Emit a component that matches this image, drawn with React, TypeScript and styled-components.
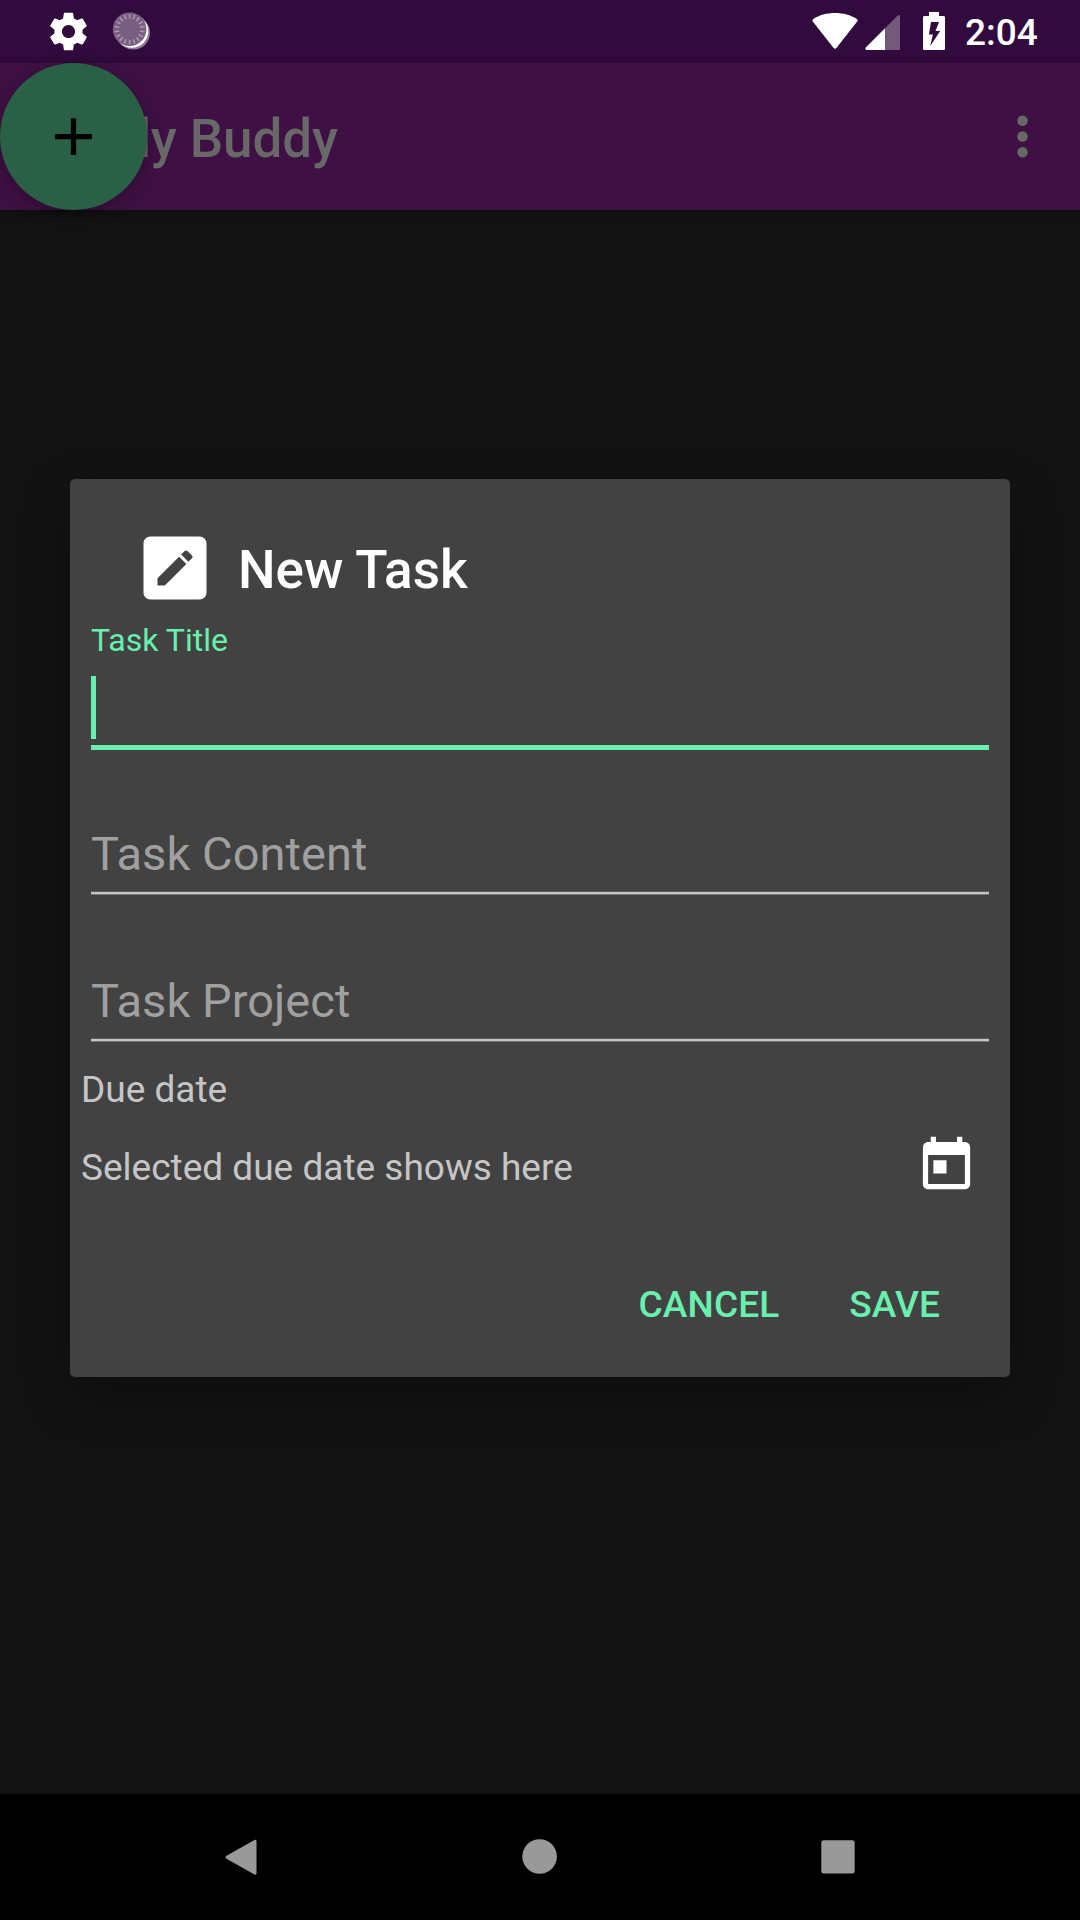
import React from "react";
import styled, { createGlobalStyle } from "styled-components";

const GlobalStyle = createGlobalStyle`
  *, *::before, *::after { box-sizing: border-box; }
  body { margin: 0; background: #131313; }
`;

const Screen = styled.div`
  position: relative;
  width: 1080px;
  height: 1920px;
  display: flex;
  flex-direction: column;
  overflow: hidden;
  background: #131313;
  font-family: Roboto, "Noto Sans", sans-serif;
`;

const StatusBar = styled.header`
  height: 63px;
  flex: none;
  display: flex;
  align-items: flex-start;
  justify-content: space-between;
  padding: 0 41px 0 46px;
  background: #310b3d;
`;

const StatusGroup = styled.div`
  display: flex;
  align-items: center;
  height: 62px;
`;

const Glyph = styled.svg<{ $w: number; $h: number; $ml?: number }>`
  display: block;
  flex: none;
  width: ${(p) => p.$w}px;
  height: ${(p) => p.$h}px;
  margin-left: ${(p) => p.$ml ?? 0}px;
`;

const Clock = styled.span`
  width: 74px;
  margin-left: 20px;
  padding-top: 4px;
  font-size: 37px;
  font-weight: 500;
  line-height: 44px;
  color: #fff;
`;

const Toolbar = styled.div`
  height: 147px;
  flex: none;
  display: flex;
  align-items: center;
  justify-content: space-between;
  padding: 0 26px 0 42px;
  background: #3e1043;
  box-shadow: 0 2px 8px rgba(0, 0, 0, 0.4);
`;

const AppTitle = styled.h1`
  margin: 0;
  padding-top: 5px;
  font-size: 53px;
  font-weight: 500;
  line-height: 62px;
  letter-spacing: -0.08px;
  color: #686868;
`;

const Fab = styled.button`
  position: absolute;
  left: 0;
  top: 63px;
  width: 147px;
  height: 147px;
  padding: 0;
  border: 0;
  border-radius: 50%;
  display: grid;
  place-items: center;
  background: #2a6045;
  box-shadow: 0 5px 16px rgba(0, 0, 0, 0.28);
`;

const Body = styled.main`
  flex: 1;
  display: flex;
  flex-direction: column;
  align-items: center;
  padding-top: 269px;
`;

const Dialog = styled.section`
  width: 940px;
  height: 898px;
  display: flex;
  flex-direction: column;
  border-radius: 5px;
  background: #424242;
  box-shadow: 0 18px 48px rgba(0, 0, 0, 0.35);
`;

const DialogHeader = styled.div`
  display: flex;
  align-items: center;
  gap: 21px;
  height: 84px;
  margin: 47px 63px 0;
`;

const DialogTitle = styled.h2`
  margin: 0;
  padding-top: 4px;
  font-size: 53px;
  font-weight: 500;
  line-height: 62px;
  color: #fff;
`;

const Fields = styled.div`
  display: flex;
  flex-direction: column;
  padding: 0 21px;
  margin-top: 11px;
`;

const Field = styled.label`
  display: flex;
  flex-direction: column;
  justify-content: flex-end;
`;

const FocusedField = styled(Field)`
  height: 129px;
  justify-content: space-between;
`;

const IdleField = styled(Field)<{ $h: number }>`
  height: ${(p) => p.$h}px;
`;

const FloatingLabel = styled.span`
  font-size: 32px;
  line-height: 38px;
  color: #69f0ae;
`;

const ActiveInput = styled.div`
  height: 74px;
  border-bottom: 5px solid #69f0ae;
`;

const Caret = styled.div`
  width: 5px;
  height: 63px;
  background: #69f0ae;
`;

const Hint = styled.span`
  font-size: 47px;
  line-height: 56px;
  letter-spacing: 0.05px;
  color: #a0a0a0;
`;

const Rule = styled.div`
  height: 4px;
  margin-top: 9px;
  background: linear-gradient(#5c5c5c 0 1px, #c6c6c6 1px 3px, #767676 3px 4px);
`;

const DueLabel = styled.div`
  padding-left: 11px;
  margin-top: 26px;
  font-size: 37px;
  line-height: 44px;
  color: #c6c6c6;
`;

const DueRow = styled.div`
  display: flex;
  align-items: center;
  justify-content: space-between;
  height: 63px;
  margin-top: 22px;
  padding: 0 32px 0 11px;
`;

const DueText = styled.span`
  padding-top: 4px;
  font-size: 37px;
  line-height: 44px;
  color: #c6c6c6;
`;

const Actions = styled.div`
  display: flex;
  justify-content: flex-end;
  gap: 70px;
  margin-top: 86px;
  padding-right: 70px;
`;

const TextButton = styled.button`
  padding: 0;
  border: 0;
  background: none;
  font: 500 37px/44px Roboto, "Noto Sans", sans-serif;
  letter-spacing: 0.12px;
  color: #69f0ae;
`;

const NavBar = styled.nav`
  height: 126px;
  flex: none;
  display: flex;
  align-items: center;
  justify-content: space-between;
  padding: 0 210px;
  background: #000;
`;

const ticks = Array.from({ length: 18 }, (_, i) => i * 20);

export default function App() {
  return (
    <Screen>
      <GlobalStyle />
      <StatusBar>
        <StatusGroup>
          <Glyph $w={45} $h={45} viewBox="0 0 24 24" fill="#fff">
            <path d="M19.43 12.98c.04-.32.07-.64.07-.98s-.03-.66-.07-.98l2.11-1.65c.19-.15.24-.42.12-.64l-2-3.46c-.12-.22-.39-.3-.61-.22l-2.49 1c-.52-.4-1.08-.73-1.69-.98l-.38-2.65C14.46 2.18 14.25 2 14 2h-4c-.25 0-.46.18-.49.42l-.38 2.65c-.61.25-1.17.59-1.69.98l-2.49-1c-.23-.09-.49 0-.61.22l-2 3.46c-.13.22-.07.49.12.64l2.11 1.65c-.04.32-.07.65-.07.98s.03.66.07.98l-2.11 1.65c-.19.15-.24.42-.12.64l2 3.46c.12.22.39.3.61.22l2.49-1c.52.4 1.08.73 1.69.98l.38 2.65c.03.24.24.42.49.42h4c.25 0 .46-.18.49-.42l.38-2.65c.61-.25 1.17-.59 1.69-.98l2.49 1c.23.09.49 0 .61-.22l2-3.46c.12-.22.07-.49-.12-.64l-2.11-1.65zM12 15.500c-1.930 0-3.500-1.570-3.500-3.500s1.570-3.500 3.500-3.500 3.500 1.570 3.500 3.500-1.570 3.500-3.500 3.500z" />
          </Glyph>
          <Glyph $w={40} $h={40} $ml={20} viewBox="0 0 40 40">
            <circle cx="22.2" cy="21.8" r="16.8" fill="#8f7b98" />
            <circle cx="20.7" cy="20.2" r="16.6" fill="#fff" />
            <circle cx="18.6" cy="18.2" r="16.8" fill="#785f82" />
            {ticks.map((a) => (
              <line key={a} x1="18.6" y1="2.9" x2="18.6" y2="7.6" stroke="#ab9ab1" strokeWidth="1.5" transform={`rotate(${a} 18.6 18.2)`} />
            ))}
          </Glyph>
        </StatusGroup>
        <StatusGroup>
          <Glyph $w={46} $h={40} viewBox="0 0 46 40" fill="#fff">
            <path d="M.8 10.600C.2 9.600.4 8.700 1.400 8 7 4 15 2 23 2s16 2 21.800 6c1 .7 1.200 1.600.4 2.600L24.600 36.800c-1 1.400-2.200 1.400-3.200 0z" />
          </Glyph>
          <Glyph $w={36} $h={40} $ml={7} viewBox="0 0 36 40">
            <path d="M20 17.300V39H2C0 39 0 37.500 1 36.300z" fill="#fff" />
            <path d="M20 17.300 32.500 4.800C34 3.500 35 4 35 5.700V37.500c0 1-.5 1.500-1.500 1.500H20z" fill="#735a7b" />
          </Glyph>
          <Glyph $w={22} $h={40} $ml={22} viewBox="0 0 22 40">
            <path fill="#fff" fillRule="evenodd" d="M6 1h10v4h4.500c1 0 1.500.6 1.500 1.500v31c0 1-.5 1.500-1.500 1.500h-19C.5 39 0 38.500 0 37.500v-31C0 5.600.5 5 1.500 5H6zM8 11 5.900 23.500h4L7.300 35 17.200 20h-4.700L16 11z" />
          </Glyph>
          <Clock>2:04</Clock>
        </StatusGroup>
      </StatusBar>

      <Toolbar>
        <AppTitle>Study Buddy</AppTitle>
        <Glyph $w={63} $h={63} viewBox="0 0 24 24" fill="#686868">
          <circle cx="12" cy="6" r="2" />
          <circle cx="12" cy="12" r="2" />
          <circle cx="12" cy="18" r="2" />
        </Glyph>
      </Toolbar>

      <Body>
        <Dialog role="dialog">
          <DialogHeader>
            <Glyph $w={84} $h={84} viewBox="0 0 24 24" fill="#fff">
              <path d="M19 3H5c-1.100 0-2 .9-2 2v14c0 1.100.9 2 2 2h14c1.100 0 2-.9 2-2V5c0-1.100-.9-2-2-2zM9.080 17H7v-2.080l6.170-6.170 2.080 2.080L9.080 17zm7.770-7.770-1.010 1.010-2.080-2.080 1.010-1.010c.22-.22.57-.22.78 0l1.300 1.300c.22.21.22.56 0 .78z" />
            </Glyph>
            <DialogTitle>New Task</DialogTitle>
          </DialogHeader>
          <Fields>
            <FocusedField>
              <FloatingLabel>Task Title</FloatingLabel>
              <ActiveInput>
                <Caret />
              </ActiveInput>
            </FocusedField>
            <IdleField $h={145}>
              <Hint>Task Content</Hint>
              <Rule />
            </IdleField>
            <IdleField $h={147}>
              <Hint>Task Project</Hint>
              <Rule />
            </IdleField>
          </Fields>
          <DueLabel>Due date</DueLabel>
          <DueRow>
            <DueText>Selected due date shows here</DueText>
            <Glyph $w={63} $h={63} viewBox="0 0 24 24" fill="#fff">
              <path d="M19 3h-1V1h-2v2H8V1H6v2H5c-1.110 0-1.990.9-1.990 2L3 19c0 1.100.89 2 2 2h14c1.100 0 2-.9 2-2V5c0-1.100-.9-2-2-2zm0 16H5V8h14v11zM7 10h5v5H7z" />
            </Glyph>
          </DueRow>
          <Actions>
            <TextButton>CANCEL</TextButton>
            <TextButton>SAVE</TextButton>
          </Actions>
        </Dialog>
      </Body>

      <NavBar>
        <Glyph $w={63} $h={63} viewBox="0 0 63 63" fill="#999">
          <path d="M44 14.300c1.400-1 2.500-.5 2.500 1.200v31.500c0 1.700-1.100 2.200-2.500 1.200L16.500 32.800c-1.300-.9-1.300-2.200 0-3.100z" />
        </Glyph>
        <Glyph $w={63} $h={63} viewBox="0 0 63 63" fill="#999">
          <circle cx="30.6" cy="30.5" r="17.3" />
        </Glyph>
        <Glyph $w={63} $h={63} viewBox="0 0 63 63" fill="#999">
          <rect x="14.3" y="14.2" width="33.4" height="33.4" rx="2.5" />
        </Glyph>
      </NavBar>

      <Fab aria-label="Add task">
        <Glyph $w={63} $h={63} viewBox="0 0 24 24" fill="#000">
          <path d="M19 13h-6v6h-2v-6H5v-2h6V5h2v6h6v2z" />
        </Glyph>
      </Fab>
    </Screen>
  );
}
